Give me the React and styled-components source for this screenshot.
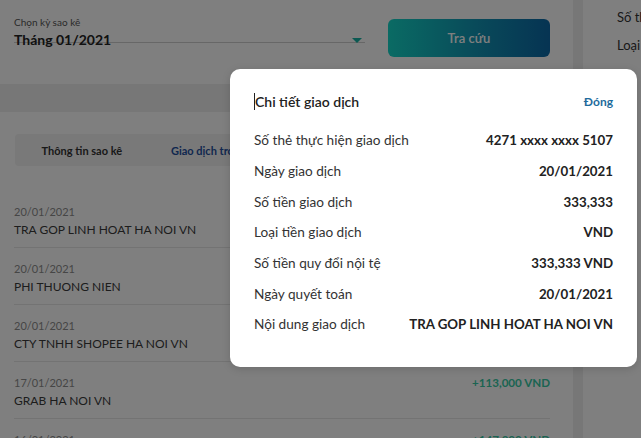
import React from "react";
import styled, { createGlobalStyle } from "styled-components";

const GlobalStyle = createGlobalStyle`
  body {
    margin: 0;
    font-family: "Lato", "Noto Sans", sans-serif;
    color: #222;
  }
`;

const Page = styled.div`
  position: relative;
  width: 641px;
  height: 438px;
  overflow: hidden;
  display: flex;
  background: #eeeeee;
`;

const MainColumn = styled.div`
  width: 573px;
  flex-shrink: 0;
  display: flex;
  flex-direction: column;
`;

const FilterCard = styled.div`
  height: 84px;
  flex-shrink: 0;
  background: #fff;
  display: flex;
  align-items: flex-start;
  padding: 0 23px 0 14px;
  box-sizing: border-box;
`;

const SelectField = styled.div`
  width: 351px;
  padding-top: 15px;
  border-bottom: 1px solid #cfcfcf;
  height: 43px;
  box-sizing: border-box;
`;

const FieldLabel = styled.div`
  font-size: 10px;
  line-height: 14px;
  color: #555;
`;

const FieldValue = styled.div`
  display: flex;
  justify-content: space-between;
  align-items: center;
  font-size: 14px;
  font-weight: 700;
  line-height: 20px;
  margin-top: 1px;
  color: #222;
`;

const Caret = styled.span`
  width: 0;
  height: 0;
  margin-right: 3px;
  border-left: 5px solid transparent;
  border-right: 5px solid transparent;
  border-top: 5px solid #17b3a4;
`;

const SearchButton = styled.button`
  margin: 19px 0 0 auto;
  width: 162px;
  height: 38px;
  border: 0;
  border-radius: 6px;
  background: linear-gradient(90deg, #14d6c8 0%, #1294b4 55%, #0c68a6 100%);
  color: #fff;
  font-family: inherit;
  font-size: 13px;
  font-weight: 600;
`;

const ListCard = styled.div`
  flex: 1;
  min-height: 0;
  overflow: hidden;
  margin-top: 28px;
  background: #fff;
  padding: 22px 23px 0 14px;
`;

const Tabs = styled.div`
  display: flex;
  height: 32px;
  margin-left: 1px;
  border-radius: 4px;
  background: #f2f2f2;
`;

const Tab = styled.div`
  flex: 1;
  display: flex;
  align-items: center;
  justify-content: center;
  font-size: 11px;
  font-weight: 700;
  color: ${(p) => (p.$active ? "#1f4f9e" : "#333")};
`;

const List = styled.div`
  margin-top: 25px;
`;

const Item = styled.div`
  padding: 12px 0 8px;
  height: 57px;
  box-sizing: border-box;
  border-bottom: 1px solid #e6e6e6;
`;

const ItemTop = styled.div`
  display: flex;
  justify-content: space-between;
  align-items: center;
  height: 16px;
`;

const ItemDate = styled.span`
  font-size: 11px;
  color: #8c8c8c;
`;

const ItemAmount = styled.span`
  font-size: 11.6px;
  font-weight: 700;
  color: #36c9a4;
`;

const ItemName = styled.div`
  margin-top: 2px;
  font-size: 12px;
  line-height: 18px;
  color: #3a3a3a;
`;

const SideCard = styled.div`
  flex: 1;
  min-width: 0;
  margin-left: 10px;
  background: #fff;
  padding: 8px 0 0 34px;
`;

const SideRow = styled.div`
  font-size: 13px;
  line-height: 18px;
  color: #333;
  white-space: nowrap;
  margin-bottom: 10px;
`;

const Backdrop = styled.div`
  position: absolute;
  inset: 0;
  background: rgba(0, 0, 0, 0.5);
`;

const Modal = styled.div`
  position: absolute;
  left: 230px;
  top: 69px;
  width: 407px;
  height: 298px;
  box-sizing: border-box;
  padding: 20px 24px 0;
  background: #fff;
  border-radius: 10px;
  box-shadow: 0 2px 8px rgba(0, 0, 0, 0.15);
`;

const ModalHeader = styled.div`
  display: flex;
  justify-content: space-between;
  align-items: center;
  height: 24px;
  margin-bottom: 12px;
`;

const ModalTitle = styled.div`
  font-size: 14px;
  font-weight: 600;
  color: #222;
  border-left: 1px solid #222;
`;

const CloseLink = styled.a`
  font-size: 12px;
  font-weight: 700;
  color: #1d6b9c;
  cursor: pointer;
`;

const DetailRow = styled.div`
  display: flex;
  justify-content: space-between;
  align-items: center;
  height: 30.7px;
`;

const DetailLabel = styled.span`
  font-size: 13.6px;
  color: #333;
`;

const DetailValue = styled.span`
  font-size: 13.3px;
  font-weight: 700;
  color: #222;
`;

const transactions = [
  { date: "20/01/2021", name: "TRA GOP LINH HOAT HA NOI VN", amount: "-333,333 VND" },
  { date: "20/01/2021", name: "PHI THUONG NIEN", amount: "-299,000 VND" },
  { date: "20/01/2021", name: "CTY TNHH SHOPEE HA NOI VN", amount: "-113,000 VND" },
  { date: "17/01/2021", name: "GRAB HA NOI VN", amount: "+113,000 VND" },
  { date: "16/01/2021", name: "GRAB HA NOI VN", amount: "+147,000 VND" },
];

const details = [
  ["Số thẻ thực hiện giao dịch", "4271 xxxx xxxx 5107"],
  ["Ngày giao dịch", "20/01/2021"],
  ["Số tiền giao dịch", "333,333"],
  ["Loại tiền giao dịch", "VND"],
  ["Số tiền quy đổi nội tệ", "333,333 VND"],
  ["Ngày quyết toán", "20/01/2021"],
  ["Nội dung giao dịch", "TRA GOP LINH HOAT HA NOI VN"],
];

const tabs = ["Thông tin sao kê", "Giao dịch trong kỳ", "Trả góp", "Điểm thưởng"];

export default function App() {
  return (
    <>
      <GlobalStyle />
      <Page>
        <MainColumn>
          <FilterCard>
            <SelectField>
              <FieldLabel>Chọn kỳ sao kê</FieldLabel>
              <FieldValue>
                Tháng 01/2021
                <Caret />
              </FieldValue>
            </SelectField>
            <SearchButton>Tra cứu</SearchButton>
          </FilterCard>
          <ListCard>
            <Tabs>
              {tabs.map((t, i) => (
                <Tab key={t} $active={i === 1}>
                  {t}
                </Tab>
              ))}
            </Tabs>
            <List>
              {transactions.map((tx, i) => (
                <Item key={i}>
                  <ItemTop>
                    <ItemDate>{tx.date}</ItemDate>
                    <ItemAmount>{tx.amount}</ItemAmount>
                  </ItemTop>
                  <ItemName>{tx.name}</ItemName>
                </Item>
              ))}
            </List>
          </ListCard>
        </MainColumn>
        <SideCard>
          <SideRow>Số thẻ</SideRow>
          <SideRow>Loại thẻ</SideRow>
        </SideCard>
        <Backdrop />
        <Modal>
          <ModalHeader>
            <ModalTitle>Chi tiết giao dịch</ModalTitle>
            <CloseLink>Đóng</CloseLink>
          </ModalHeader>
          {details.map(([label, value]) => (
            <DetailRow key={label}>
              <DetailLabel>{label}</DetailLabel>
              <DetailValue>{value}</DetailValue>
            </DetailRow>
          ))}
        </Modal>
      </Page>
    </>
  );
}
